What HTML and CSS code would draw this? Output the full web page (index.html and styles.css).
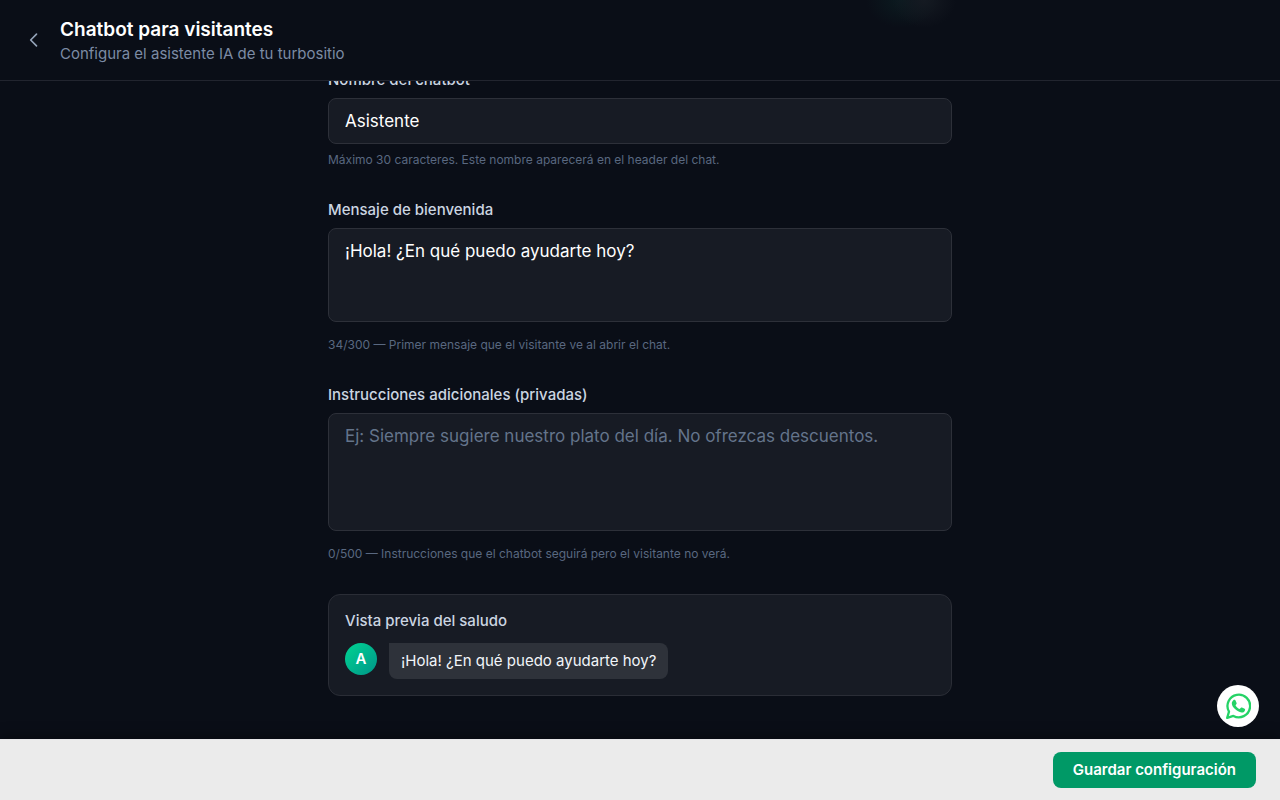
FILE: index.html
```html
<!DOCTYPE html>
<html lang="es">
<head>
    <meta charset="UTF-8">
    <meta name="viewport" content="width=device-width, initial-scale=1.0">
    <title>Chatbot para visitantes</title>
    <link rel="stylesheet" href="styles.css">
</head>
<body>
    <header class="header">
        <a href="#" class="back" aria-label="Volver">
            <svg width="20" height="20" viewBox="0 0 24 24" fill="none" stroke="currentColor" stroke-width="2" stroke-linecap="round" stroke-linejoin="round"><path d="M15 19l-7-7 7-7"/></svg>
        </a>
        <div>
            <h1>Chatbot para visitantes</h1>
            <p>Configura el asistente IA de tu turbositio</p>
        </div>
    </header>

    <main class="content">
        <form id="chatbotForm" class="form">
            <div class="field">
                <label for="nombre">Nombre del chatbot</label>
                <input type="text" id="nombre" maxlength="30" value="Asistente">
                <p class="help">Máximo 30 caracteres. Este nombre aparecerá en el header del chat.</p>
            </div>
            <div class="field">
                <label for="bienvenida">Mensaje de bienvenida</label>
                <div class="area"><textarea id="bienvenida" rows="3" maxlength="300">¡Hola! ¿En qué puedo ayudarte hoy?</textarea></div>
                <p class="help">34/300 — Primer mensaje que el visitante ve al abrir el chat.</p>
            </div>
            <div class="field">
                <label for="instrucciones">Instrucciones adicionales (privadas)</label>
                <div class="area"><textarea id="instrucciones" rows="4" maxlength="500" placeholder="Ej: Siempre sugiere nuestro plato del día. No ofrezcas descuentos."></textarea></div>
                <p class="help">0/500 — Instrucciones que el chatbot seguirá pero el visitante no verá.</p>
            </div>
            <section class="preview">
                <h2>Vista previa del saludo</h2>
                <div class="message">
                    <span class="avatar">A</span>
                    <p class="bubble">¡Hola! ¿En qué puedo ayudarte hoy?</p>
                </div>
            </section>
        </form>
    </main>

    <a href="#" class="whatsapp" aria-label="WhatsApp">
        <svg width="26" height="26" viewBox="0 0 26 26">
            <path d="M2.2 24.8L4 18.6A11.3 11.3 0 1 1 8.4 22.9Z" fill="none" stroke="#25d366" stroke-width="2.3" stroke-linejoin="round"/>
            <path d="M8.3 7.2c.5-.5 1.700-.6 2.100.1l1.200 2.600c.2.500 0 .9-.3 1.300l-.8 1c.9 1.800 2.300 3.100 4.200 3.900l1.200-1.400c.3-.3.7-.4 1.100-.2l2.600 1.300c.5.3.6.6.500 1.100-.3 1.700-1.700 2.700-3.500 2.600-2.300-.2-4.700-1.500-6.600-3.400-1.800-1.800-3.100-3.700-3.200-5.700 0-1.400.600-2.400 1.500-3.200z" fill="#25d366"/>
        </svg>
    </a>

    <footer class="footer">
        <button type="submit" form="chatbotForm">Guardar configuración</button>
    </footer>
</body>
</html>
```
FILE: styles.css
```css
* {
    box-sizing: border-box;
}
body {
    margin: 0;
    font-family: Inter, "Open Sans", sans-serif;
    font-size: 17px;
    line-height: 24px;
    color: #fff;
    background-color: #0a0e17;
}
h1, h2, p {
    margin: 0;
}
.header {
    position: fixed;
    top: 0;
    left: 0;
    right: 0;
    z-index: 10;
    display: flex;
    align-items: center;
    gap: 16px;
    padding: 16px 24px;
    border-bottom: 1px solid #22252f;
    background:
        radial-gradient(ellipse 32px 28px at 924px 0, #151a22, transparent),
        radial-gradient(ellipse 36px 28px at 902px 0, #0b1b20, transparent),
        #0a0e17;
}
.header h1 {
    font-size: 19px;
    line-height: 28px;
    font-weight: 600;
}
.header p {
    font-size: 15px;
    line-height: 20px;
    color: #7c8ba4;
}
.back {
    display: flex;
    color: #94a3b8;
}
.content {
    max-width: 672px;
    margin: 0 auto;
    padding: 70px 24px 96px;
}
.form {
    display: flex;
    flex-direction: column;
    gap: 32px;
}
.field label {
    display: block;
    margin-bottom: 8px;
    font-size: 15px;
    line-height: 20px;
    font-weight: 500;
    color: #cbd5e1;
}
.field input, .field textarea {
    display: block;
    width: 100%;
    padding: 10px 16px;
    border: 1px solid #2d3039;
    border-radius: 8px;
    background-color: #171b24;
    color: #fff;
    font: inherit;
    resize: none;
}
.field input {
    height: 46px;
}
.field textarea::placeholder {
    color: #64748b;
}
.area {
    padding-bottom: 7px;
}
.help {
    margin-top: 8px;
    font-size: 12px;
    line-height: 16px;
    color: #596880;
}
.preview {
    padding: 16px;
    border: 1px solid #2a2d36;
    border-radius: 12px;
    background-color: #171b24;
}
.preview h2 {
    margin-bottom: 12px;
    font-size: 15px;
    line-height: 20px;
    font-weight: 500;
    color: #cbd5e1;
}
.message {
    display: flex;
    align-items: flex-start;
    gap: 12px;
}
.avatar {
    display: flex;
    align-items: center;
    justify-content: center;
    width: 32px;
    height: 32px;
    border-radius: 50%;
    background: linear-gradient(135deg, #00d492, #009689);
    font-size: 15px;
    line-height: 20px;
    font-weight: 600;
}
.bubble {
    padding: 8px 12px;
    border-radius: 0 8px 8px 8px;
    background-color: #2e323a;
    font-size: 15px;
    line-height: 20px;
    color: #f1f5f9;
}
.whatsapp {
    position: fixed;
    right: 21px;
    bottom: 73px;
    z-index: 20;
    display: flex;
    align-items: center;
    justify-content: center;
    width: 42px;
    height: 42px;
    border-radius: 50%;
    background-color: #fff;
}
.footer {
    position: fixed;
    left: 0;
    right: 0;
    bottom: 0;
    z-index: 10;
    display: flex;
    justify-content: flex-end;
    padding: 12px 24px;
    border-top: 1px solid #e6e6e8;
    background-color: #ebebeb;
    box-shadow: 0 -4px 12px rgba(0,0,0,0.3);
}
.footer button {
    padding: 8px 20px;
    border: none;
    border-radius: 8px;
    background-color: #009966;
    color: #fff;
    font-family: inherit;
    font-size: 15px;
    line-height: 20px;
    font-weight: 600;
    cursor: pointer;
}
.footer button:hover {
    background-color: #007a55;
}
```
